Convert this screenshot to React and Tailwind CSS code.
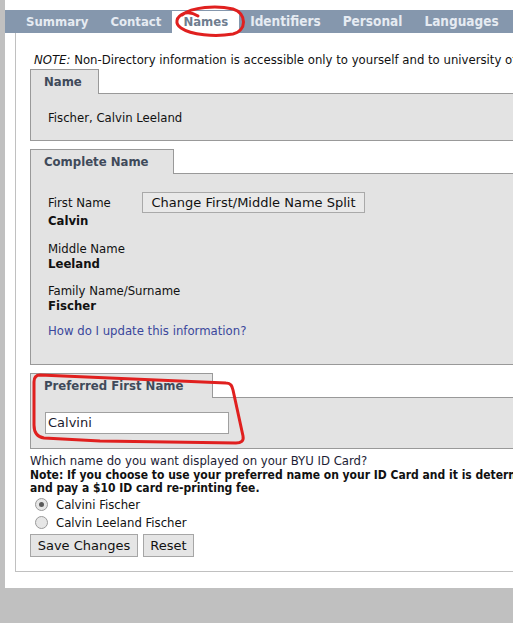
import React from "react";

const font = { fontFamily: '"DejaVu Sans Condensed", "DejaVu Sans", Verdana, sans-serif', fontStretch: "condensed" };
const wideFont = { fontFamily: '"DejaVu Sans", Verdana, sans-serif', fontStretch: "normal" };

function Tab({ label, active }) {
  return (
    <div
      className={
        active
          ? "h-[22px] mt-[1px] px-[11px] bg-white text-[#6f7d8f] font-bold text-[13px] leading-[22px]"
          : "h-[23px] px-[11px] text-[#e6ebf2] font-bold text-[13px] leading-[23px]"
      }
    >
      {label}
    </div>
  );
}

function WideTab({ label }) {
  return (
    <div className="h-[23px] px-[11px] text-[#e6ebf2] font-bold text-[13.5px] leading-[23px]">{label}</div>
  );
}

function Panel({ title, tabW, children, bodyClass }) {
  return (
    <div className="w-[640px]">
      <div className="flex h-[25px]">
        <div
          className="h-[25px] border-t border-l border-r border-[#999999] bg-[#e3e3e3] pl-[13px] pt-[4px] text-[13px] leading-[15px] font-bold text-[#3f4a5a]"
          style={{ width: tabW }}
        >
          {title}
        </div>
        <div className="flex-1 border-b border-[#999999]" />
      </div>
      <div className={"border-l border-r border-b border-[#999999] bg-[#e3e3e3] " + bodyClass}>{children}</div>
    </div>
  );
}

function Radio({ checked }) {
  return (
    <span className="relative inline-block w-[13px] h-[13px] rounded-full border border-[#9a9a9a] bg-[#e6e6e6]">
      {checked && <span className="absolute left-[3px] top-[3px] w-[5px] h-[5px] rounded-full bg-[#5a5a5a]" />}
    </span>
  );
}

export default function App() {
  return (
    <div className="relative w-[513px] h-[623px] overflow-hidden bg-[#c0c0c0] text-[#111111]" style={font}>
      <div className="ml-[5px] w-[800px] bg-white pt-[10px] pb-[16px]">
        <div className="h-[23px] bg-[#8597ad] flex pl-[10px]">
          <Tab label="Summary" />
          <Tab label="Contact" />
          <Tab label="Names" active />
          <WideTab label="Identifiers" />
          <WideTab label="Personal" />
          <WideTab label="Languages" />
        </div>
        <div className="ml-[10px] border-l border-b border-[#c0c0c0] pl-[14px] pt-[20px] pb-[14px] text-[13px]">
          <div className="pl-[4px] leading-[14px] whitespace-nowrap">
            <i>NOTE:</i> Non-Directory information is accessible only to yourself and to university officials with a need to know.
          </div>
          <div className="mt-[2px]">
            <Panel title="Name" tabW={69} bodyClass="pl-[17px] pt-[16px] pb-[14px]">
              <div className="leading-[16px]">Fischer, Calvin Leeland</div>
            </Panel>
          </div>
          <div className="mt-[8px]">
            <Panel title="Complete Name" tabW={144} bodyClass="pl-[17px] pt-[18px] pb-[26px]">
              <div className="flex items-center h-[21px]">
                <div className="w-[94px] leading-[15px]">First Name</div>
                <button
                  className="h-[21px] w-[223px] border border-[#a9a9a9] bg-[#e9e9e9] text-[13px] leading-[19px] text-[#111111]"
                  style={wideFont}
                >
                  Change First/Middle Name Split
                </button>
              </div>
              <div className="font-bold leading-[15px]">Calvin</div>
              <div className="mt-[13px] leading-[15px]">Middle Name</div>
              <div className="font-bold leading-[15px]">Leeland</div>
              <div className="mt-[12px] leading-[15px]">Family Name/Surname</div>
              <div className="font-bold leading-[15px]">Fischer</div>
              <div className="mt-[10px] leading-[15px] text-[#3a479c]">How do I update this information?</div>
            </Panel>
          </div>
          <div className="mt-[8px]">
            <Panel title="Preferred First Name" tabW={183} bodyClass="pl-[14px] pt-[14px] pb-[14px]">
              <div
                className="w-[184px] h-[22px] border border-[#a0a0a0] bg-white pl-[2px] leading-[20px] text-[#1a1a2e]"
                style={wideFont}
              >
                Calvini
              </div>
            </Panel>
          </div>
          <div className="mt-[5px] leading-[14px] text-[#1c1c34] whitespace-nowrap">
            Which name do you want displayed on your BYU ID Card?
          </div>
          <div className="mt-[1px] font-bold text-[12px] leading-[13px] whitespace-nowrap">
            <div>
              Note: If you choose to use your preferred name on your ID Card and it is determined that you need a new card, you must come in person
            </div>
            <div>and pay a $10 ID card re-printing fee.</div>
          </div>
          <div className="flex items-center h-[18px] pl-[5px]">
            <Radio checked />
            <span className="ml-[8px] leading-[15px]">Calvini Fischer</span>
          </div>
          <div className="flex items-center h-[18px] pl-[5px]">
            <Radio />
            <span className="ml-[8px] leading-[15px]">Calvin Leeland Fischer</span>
          </div>
          <div className="mt-[3px] flex gap-[5px]">
            <button
              className="h-[23px] w-[108px] border border-[#a6a6a6] bg-[#e5e5e5] text-[13px] leading-[21px] text-[#111111]"
              style={wideFont}
            >
              Save Changes
            </button>
            <button
              className="h-[23px] w-[51px] border border-[#a6a6a6] bg-[#e5e5e5] text-[13px] leading-[21px] text-[#111111]"
              style={wideFont}
            >
              Reset
            </button>
          </div>
        </div>
      </div>
      <svg className="absolute left-0 top-0 pointer-events-none" width="513" height="623" viewBox="0 0 513 623">
        <path
          d="M 182 15 C 192 7, 216 5, 233 9 C 247 13, 247 31, 233 34 C 215 37, 191 35, 181 28 C 175 24, 175 17, 185 13 C 190 12, 195 14, 198 16"
          fill="none"
          stroke="#e0201f"
          strokeWidth="3"
          strokeLinecap="round"
        />
        <path
          d="M 40 375 L 226 383 C 231 383, 232 386, 233 390 L 243 436 C 244 441, 241 443, 236 443 L 100 441 C 80 440, 60 439, 44 438 C 37 437, 34 432, 34 425 L 34 382 C 34 377, 36 375, 40 375 Z"
          fill="none"
          stroke="#e0201f"
          strokeWidth="3"
          strokeLinejoin="round"
        />
      </svg>
    </div>
  );
}
